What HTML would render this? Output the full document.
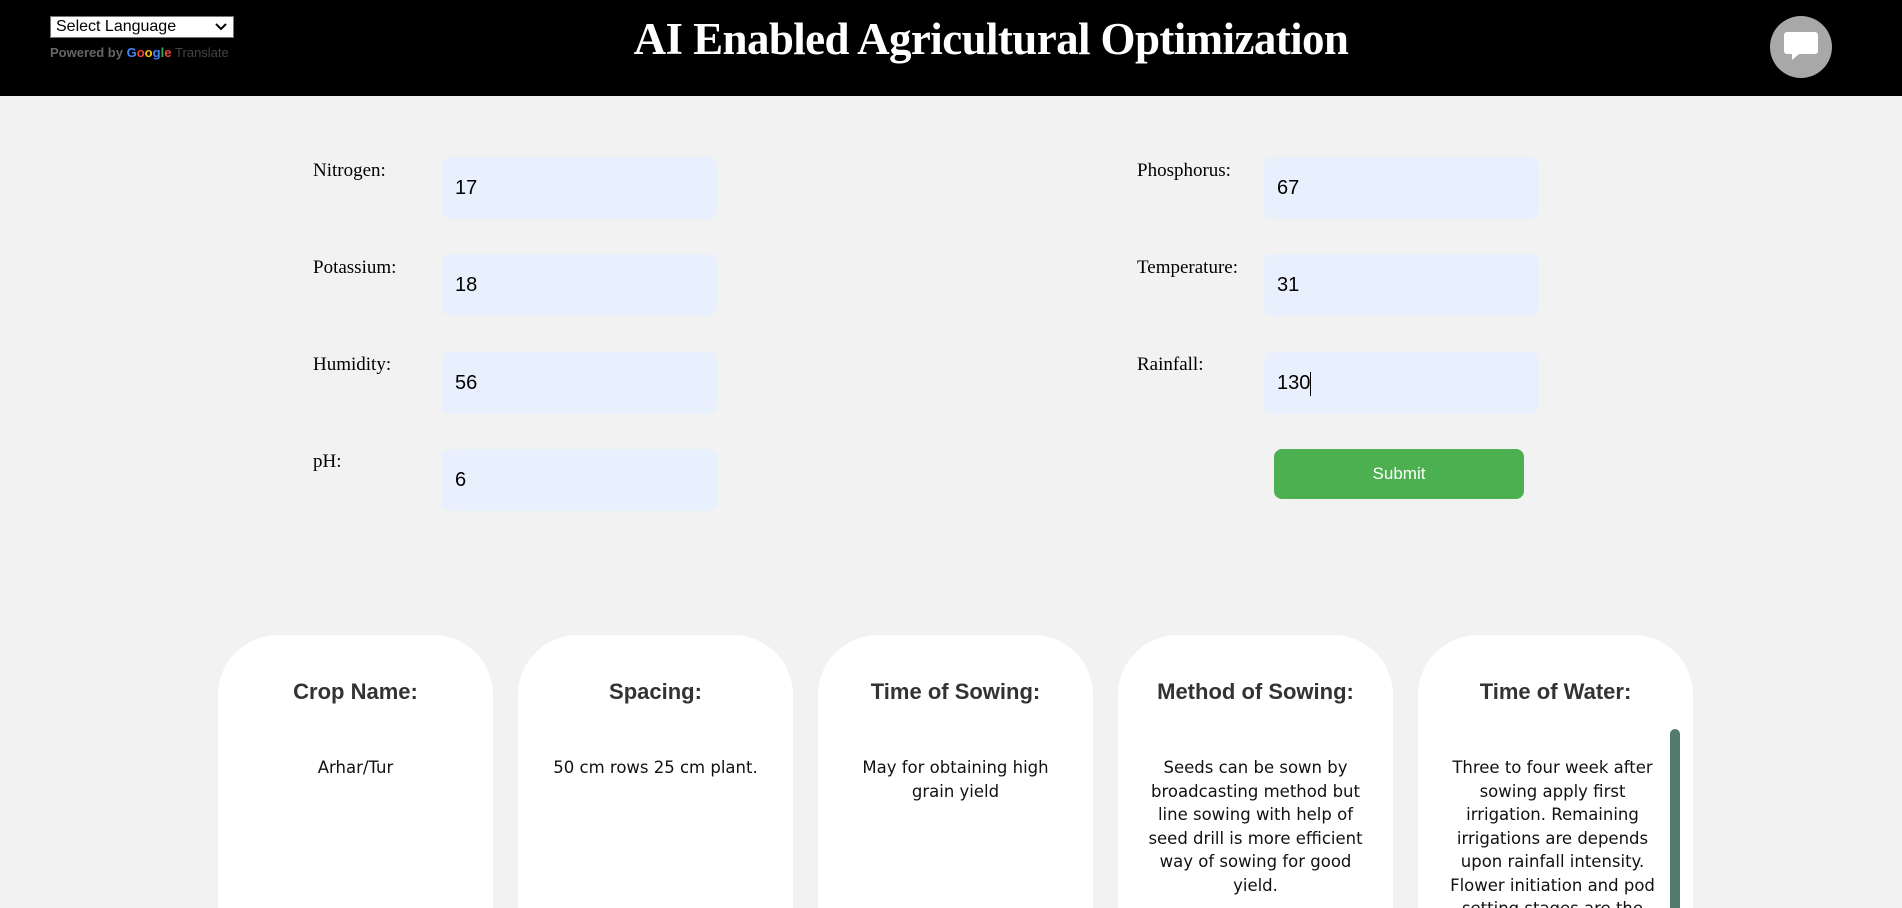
<!DOCTYPE html>
<html><head><meta charset="utf-8">
<style>
*{box-sizing:border-box;margin:0;padding:0}
html,body{width:1902px;height:908px;overflow:hidden;background:#f2f2f2;position:relative}
.hdr{position:absolute;left:0;top:0;width:1902px;height:96px;background:#000}
.sel{position:absolute;left:50px;top:16px;width:184px;height:22px;background:#fff;border:1px solid #767676;font:16px "Liberation Sans",sans-serif;color:#000;padding-left:5px;line-height:20px}
.sel svg{position:absolute;right:6px;top:6px}
.pw{position:absolute;left:50px;top:45px;font:bold 13px "Liberation Sans",sans-serif;color:#666}
.pw b{font-weight:normal}
.title{position:absolute;left:0;width:1982px;top:13px;text-align:center;font:bold 45px "Liberation Serif",serif;color:#fff;letter-spacing:-0.6px}
.chat{position:absolute;left:1770px;top:16px;width:62px;height:62px;border-radius:50%;background:#a8a8a8}
.lbl{position:absolute;font:19px "Liberation Serif",serif;color:#000}
.inp{position:absolute;width:275px;height:62px;background:#e8f0fe;border-radius:8px;font:20px "Liberation Sans",sans-serif;color:#000;padding-left:13px;line-height:62px}
.btn{position:absolute;left:1274px;top:449px;width:250px;height:50px;background:#4caf50;border-radius:8px;color:#fff;font:17px "Liberation Sans",sans-serif;text-align:center;line-height:50px}
.card{position:absolute;top:635px;width:275px;height:273px;overflow:hidden;background:#fff;border-radius:60px 60px 0 0;text-align:center;font-family:"DejaVu Sans","Liberation Sans",sans-serif}
.card h3{position:absolute;top:44px;left:0;right:0;font:bold 22px "Liberation Sans",sans-serif;color:#333}
.card p{position:absolute;top:121px;left:26px;right:26px;font-size:16.5px;line-height:23.5px;color:#111}
</style></head><body>
<div class="hdr">
  <div class="sel">Select Language<svg width="12" height="8" viewBox="0 0 12 8"><path d="M1 1l5 5 5-5" stroke="#000" stroke-width="2" fill="none"/></svg></div>
  <div class="pw">Powered by <span style="color:#4285f4">G</span><span style="color:#ea4335">o</span><span style="color:#fbbc05">o</span><span style="color:#4285f4">g</span><span style="color:#34a853">l</span><span style="color:#ea4335">e</span> <b style="color:#444">Translate</b></div>
  <div class="title">AI Enabled Agricultural Optimization</div>
  <div class="chat"><svg width="62" height="62" viewBox="0 0 62 62"><path d="M17 16h28a3 3 0 0 1 3 3v16a3 3 0 0 1-3 3H29l-7 6v-6h-5a3 3 0 0 1-3-3V19a3 3 0 0 1 3-3z" fill="#fff"/></svg></div>
</div>

<div class="lbl" style="left:313px;top:160px">Nitrogen:</div>
<div class="inp" style="left:442px;top:157px">17</div>
<div class="lbl" style="left:313px;top:257px">Potassium:</div>
<div class="inp" style="left:442px;top:254px">18</div>
<div class="lbl" style="left:313px;top:354px">Humidity:</div>
<div class="inp" style="left:442px;top:352px">56</div>
<div class="lbl" style="left:313px;top:451px">pH:</div>
<div class="inp" style="left:442px;top:449px">6</div>

<div class="lbl" style="left:1137px;top:160px">Phosphorus:</div>
<div class="inp" style="left:1264px;top:157px">67</div>
<div class="lbl" style="left:1137px;top:257px">Temperature:</div>
<div class="inp" style="left:1264px;top:254px">31</div>
<div class="lbl" style="left:1137px;top:354px">Rainfall:</div>
<div class="inp" style="left:1264px;top:352px">130<span style="display:inline-block;width:1px;height:24px;background:#000;vertical-align:middle"></span></div>
<div class="btn">Submit</div>

<div class="card" style="left:218px"><h3>Crop Name:</h3><p>Arhar/Tur</p></div>
<div class="card" style="left:518px"><h3>Spacing:</h3><p style="left:14px;right:14px">50 cm rows 25 cm plant.</p></div>
<div class="card" style="left:818px"><h3>Time of Sowing:</h3><p style="left:34px;right:34px">May for obtaining high grain yield</p></div>
<div class="card" style="left:1118px"><h3>Method of Sowing:</h3><p>Seeds can be sown by broadcasting method but line sowing with help of seed drill is more efficient way of sowing for good yield.</p></div>
<div class="card" style="left:1418px"><h3>Time of Water:</h3><p style="right:30px;left:24px">Three to four week after sowing apply first irrigation. Remaining irrigations are depends upon rainfall intensity. Flower initiation and pod setting stages are the</p>
<div style="position:absolute;left:252px;top:94px;width:10px;height:200px;background:#527a6e;border-radius:5px"></div></div>
</body></html>
